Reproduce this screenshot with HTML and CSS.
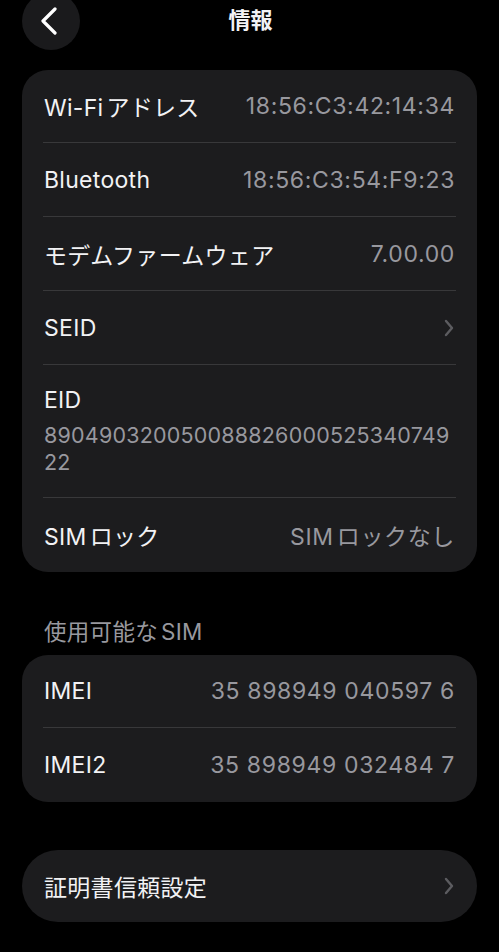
FILE: index.html
```html
<!DOCTYPE html>
<html lang="ja">
<head>
    <meta charset="UTF-8">
    <meta name="viewport" content="width=device-width, initial-scale=1.0">
    <title>情報</title>
    <link rel="stylesheet" href="styles.css">
</head>
<body>
    <header class="nav">
        <button class="back" aria-label="戻る">
            <svg width="18" height="28" viewBox="0 0 18 28">
                <path d="M15 2 L3 14 L15 26" fill="none" stroke="#fff" stroke-width="3.2" stroke-linecap="round" stroke-linejoin="round"/>
            </svg>
        </button>
        <h1>情報</h1>
    </header>

    <section class="card">
        <div class="row">
            <span class="label"><span class="lat">Wi-Fi</span>アドレス</span>
            <span class="value">18:56:C3:42:14:34</span>
        </div>
        <div class="row">
            <span class="label">Bluetooth</span>
            <span class="value">18:56:C3:54:F9:23</span>
        </div>
        <div class="row">
            <span class="label">モデムファームウェア</span>
            <span class="value">7.00.00</span>
        </div>
        <div class="row">
            <span class="label">SEID</span>
            <span class="chevron">
                <svg width="10" height="18" viewBox="0 0 10 18">
                    <path d="M2 2 L8 9 L2 16" fill="none" stroke="#5c5c60" stroke-width="2.4" stroke-linecap="round" stroke-linejoin="round"/>
                </svg>
            </span>
        </div>
        <div class="row row-tall">
            <span class="label">EID</span>
            <span class="value value-block">89049032005008882600052534074922</span>
        </div>
        <div class="row">
            <span class="label"><span class="lat">SIM</span>ロック</span>
            <span class="value"><span class="lat">SIM</span>ロックなし</span>
        </div>
    </section>

    <h2 class="section-title">使用可能な<span class="lat-before">SIM</span></h2>
    <section class="card">
        <div class="row">
            <span class="label">IMEI</span>
            <span class="value">35 898949 040597 6</span>
        </div>
        <div class="row">
            <span class="label">IMEI2</span>
            <span class="value">35 898949 032484 7</span>
        </div>
    </section>

    <section class="card card-pill">
        <div class="row">
            <span class="label">証明書信頼設定</span>
            <span class="chevron">
                <svg width="10" height="18" viewBox="0 0 10 18">
                    <path d="M2 2 L8 9 L2 16" fill="none" stroke="#5c5c60" stroke-width="2.4" stroke-linecap="round" stroke-linejoin="round"/>
                </svg>
            </span>
        </div>
    </section>
</body>
</html>
```

FILE: styles.css
```css
:root {
    --bg: #000000;
    --card: #1c1c1e;
    --text: #f2f2f4;
    --muted: #98989e;
    --separator: #38383a;
}

* {
    box-sizing: border-box;
    margin: 0;
    padding: 0;
}

body {
    background-color: var(--bg);
    color: var(--text);
    font-family: Inter, "Noto Sans CJK JP", sans-serif;
    padding: 0 22px;
    overflow: hidden;
}

.nav {
    position: relative;
    height: 70px;
}

.back {
    position: absolute;
    left: 0;
    top: -8px;
    width: 58px;
    height: 58px;
    border-radius: 50%;
    border: none;
    background-color: #1a1a1c;
    display: flex;
    align-items: center;
    justify-content: center;
    padding-right: 4px;
}

.nav h1 {
    text-align: center;
    font-size: 22px;
    font-weight: 700;
    line-height: 40px;
    padding-left: 2px;
}

.card {
    background-color: var(--card);
    border-radius: 26px;
}

.row {
    display: flex;
    align-items: center;
    justify-content: space-between;
    min-height: 74px;
    margin: 0 21px;
    padding: 0 1px;
    border-bottom: 1px solid var(--separator);
    font-size: 23px;
}

.row:first-child {
    min-height: 73px;
}

.row:last-child {
    border-bottom: none;
}

.row-tall {
    flex-direction: column;
    align-items: flex-start;
    justify-content: flex-start;
    min-height: 133px;
    padding-top: 21px;
}

.label {
    color: var(--text);
    white-space: nowrap;
    letter-spacing: 0.3px;
}

.value {
    color: var(--muted);
    white-space: nowrap;
    letter-spacing: 0.65px;
}

.lat {
    margin-right: 3px;
}

.lat-before {
    margin-left: 3px;
}

.value-block {
    white-space: normal;
    word-break: break-all;
    font-size: 21.5px;
    letter-spacing: 0.2px;
    line-height: 27px;
    margin-top: 8px;
}

.chevron {
    display: flex;
    margin-right: 1px;
}

.section-title {
    color: var(--muted);
    font-size: 22.5px;
    font-weight: 400;
    letter-spacing: 0.3px;
    padding: 45px 22px 8px;
    line-height: 30px;
}

.card-pill {
    margin-top: 48px;
    border-radius: 36px;
}

.card-pill .row {
    min-height: 72px;
}
```
